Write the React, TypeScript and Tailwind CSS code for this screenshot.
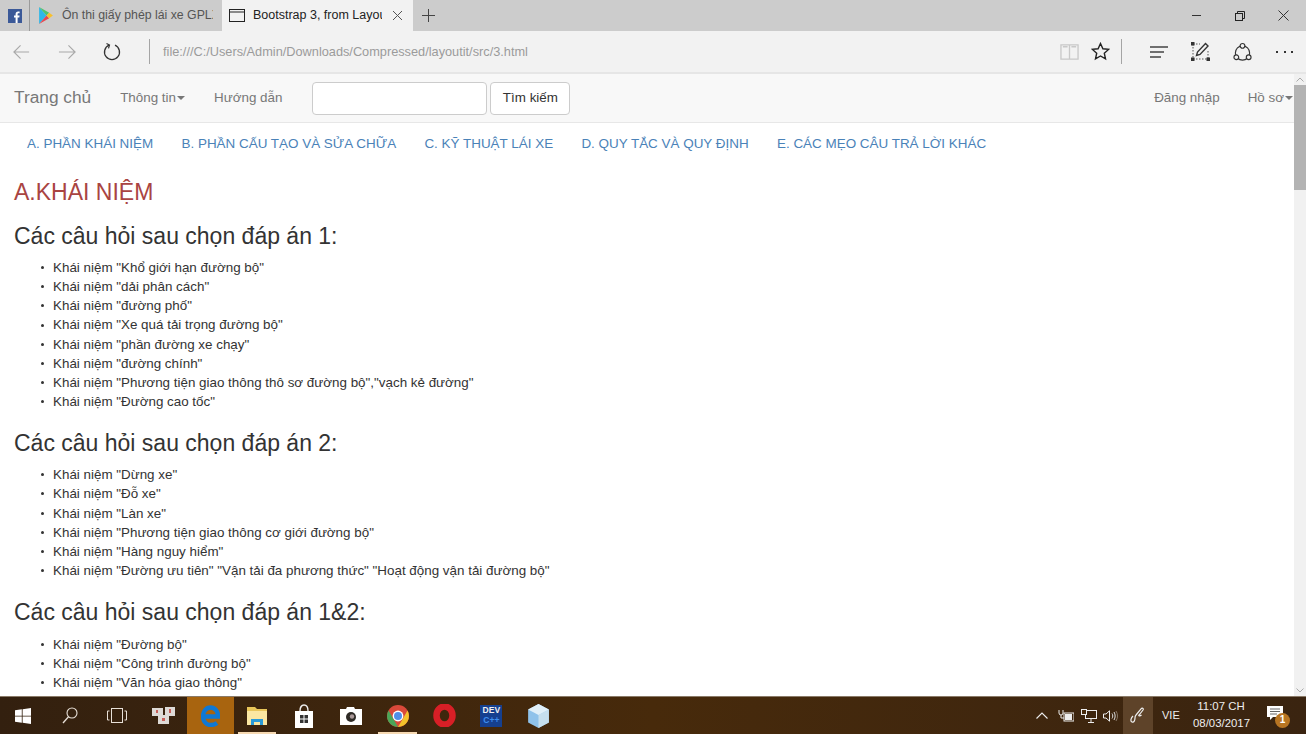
import React from "react";

const Ic = ({ w = 20, h = 20, vb = "0 0 20 20", children, c = "" }: { w?: number; h?: number; vb?: string; children: React.ReactNode; c?: string }) => (
  <svg width={w} height={h} viewBox={vb} fill="none" className={"shrink-0 " + c}>{children}</svg>
);

const Tabs = () => (
  <div className="flex h-[31px] shrink-0 bg-[#cccccc] items-stretch">
    <div className="w-[30px] flex items-center justify-center border-r border-[#9a9a9a]">
      <Ic w={14} h={14} vb="0 0 14 14"><rect width="14" height="14" fill="#3b5998" /><path d="M9.6 14V8.6h1.7l.3-2H9.6V5.300c0-.6.2-1 1-1h1V2.500c-.2 0-.8-.1-1.500-.1-1.500 0-2.500.9-2.500 2.600v1.600H6v2h1.600V14z" fill="#fff" /></Ic>
    </div>
    <div className="w-[192px] flex items-center pl-[9px] overflow-hidden">
      <Ic w={14} h={17} vb="0 0 13 16"><path d="M0 0l7 8-7 8z" fill="#2fb7e8" /><path d="M0 0l9.500 5.500L7 8z" fill="#4fc36b" /><path d="M0 16l9.500-5.500L7 8z" fill="#e8474f" /><path d="M9.500 5.500L13 8l-3.500 2.500L7 8z" fill="#f8c02c" /></Ic>
      <span className="ml-[9px] text-[12.300px] text-[#555] whitespace-nowrap overflow-hidden w-[151px]">Ôn thi giấy phép lái xe GPLX</span>
    </div>
    <div className="w-[191px] bg-[#f2f2f2] flex items-center pl-[7px]">
      <Ic w={16} h={13} vb="0 0 16 13"><rect x=".5" y=".5" width="15" height="12" stroke="#222" /><path d="M1 3h14" stroke="#222" /></Ic>
      <span className="ml-[8px] text-[12.500px] text-[#222] whitespace-nowrap overflow-hidden w-[129px]">Bootstrap 3, from Layout</span>
      <Ic w={11} h={11} vb="0 0 11 11" c="ml-[10px]"><path d="M1 1l9 9M10 1l-9 9" stroke="#555" /></Ic>
    </div>
    <div className="flex items-center pl-[9px]">
      <Ic w={13} h={13} vb="0 0 13 13"><path d="M6.500 0v13M0 6.500h13" stroke="#444" /></Ic>
    </div>
    <div className="ml-auto flex items-center">
      <div className="w-[44px] flex justify-center"><div className="w-[9px] h-px bg-[#333]" /></div>
      <div className="w-[44px] flex justify-center">
        <Ic w={10} h={10} vb="0 0 10 10"><rect x=".5" y="2.500" width="7" height="7" stroke="#222" /><path d="M2.500 2.500v-2h7v7h-2" stroke="#222" /></Ic>
      </div>
      <div className="w-[44px] pr-[1px] flex justify-center">
        <Ic w={11} h={11} vb="0 0 11 11"><path d="M.5.5l10 10M10.500.5l-10 10" stroke="#333" /></Ic>
      </div>
    </div>
  </div>
);

const AddressBar = () => (
  <div className="flex h-[43px] shrink-0 items-center bg-[#f2f2f2] border-b-2 border-[#e6e6e6]">
    <Ic w={19} h={16} vb="0 0 20 16" c="ml-[12px]"><path d="M18 8H2M9 1L2 8l7 7" stroke="#a8a8a8" strokeWidth="1.200" /></Ic>
    <Ic w={19} h={16} vb="0 0 20 16" c="ml-[27px]"><path d="M1 8h16M11 1l7 7-7 7" stroke="#a8a8a8" strokeWidth="1.200" /></Ic>
    <Ic w={19} h={19} vb="0 0 19 19" c="ml-[26px]"><path d="M6 3.200a7.500 7.500 0 1 0 6 0" stroke="#333" strokeWidth="1.300" /><path d="M3.500 1.500L6.500 3l-1 3.300" stroke="#333" strokeWidth="1.200" /></Ic>
    <div className="ml-[27px] w-px h-[25px] bg-[#a5a5a5]" />
    <span className="ml-[13px] text-[12.750px] text-[#9b9b9b]">file:///C:/Users/Admin/Downloads/Compressed/layoutit/src/3.html</span>
    <div className="ml-auto flex items-center">
      <Ic w={19} h={18} vb="0 0 20 18"><path d="M1 1.500h18v15H1zM10 1.500v15M3 3.500h5M12 3.500h5" stroke="#c8c8c8" strokeWidth="1.400" /></Ic>
      <Ic w={19} h={19} vb="0 0 19 19" c="ml-[12px]"><path d="M9.500 1.500l2.400 5.300 5.700.6-4.300 3.800 1.200 5.700-5-2.900-5 2.900 1.200-5.700-4.300-3.800 5.700-.6z" stroke="#222" strokeWidth="1.400" /></Ic>
      <div className="ml-[11px] w-px h-[25px] bg-[#a5a5a5]" />
      <Ic w={20} h={12} vb="0 0 20 12" c="ml-[27px]"><path d="M1 1h18M1 6h14M1 11h11" stroke="#444" strokeWidth="1.300" /></Ic>
      <Ic w={19} h={19} vb="0 0 19 19" c="ml-[22px]"><path d="M2 2h7M2 2v15M2 17h15M17 9v8" stroke="#555" strokeDasharray="1.500 1.500" /><rect x="0" y="0" width="3.500" height="3.500" fill="#333" /><rect x="0" y="15.500" width="3.500" height="3.500" fill="#333" /><rect x="15.500" y="15.500" width="3.500" height="3.500" fill="#333" /><path d="M5.500 13.500l1-3.500 8-8.500 2.500 2.500-8 8.500z" stroke="#333" strokeWidth="1.400" /></Ic>
      <Ic w={19} h={20} vb="0 0 20 20" c="ml-[23px]"><circle cx="10" cy="11" r="7.500" stroke="#333" strokeWidth="1.200" /><circle cx="10" cy="3.500" r="2.500" fill="#f2f2f2" stroke="#333" strokeWidth="1.200" /><circle cx="3.500" cy="15.500" r="2.500" fill="#f2f2f2" stroke="#333" strokeWidth="1.200" /><circle cx="16.500" cy="15.500" r="2.500" fill="#f2f2f2" stroke="#333" strokeWidth="1.200" /></Ic>
      <div className="ml-[24px] mr-[13px] w-[17px] flex justify-between">
        <div className="w-[2px] h-[2px] bg-[#333]" /><div className="w-[2px] h-[2px] bg-[#333]" /><div className="w-[2px] h-[2px] bg-[#333]" />
      </div>
    </div>
  </div>
);

const Caret = () => <span className="inline-block ml-[1px] align-middle border-x-[4px] border-x-transparent border-t-[4px] border-t-[#777]" />;

const Navbar = () => (
  <div className="flex h-[49px] shrink-0 items-center bg-[#f8f8f8] border-b border-[#e7e7e7] text-[#777] text-[13.400px]">
    <span className="ml-[14px] text-[17.300px]">Trang chủ</span>
    <span className="ml-[29px]">Thông tin<Caret /></span>
    <span className="ml-[29px]">Hướng dẫn</span>
    <div className="ml-[30px] w-[175px] h-[33px] bg-white border border-[#ccc] rounded-[4px]" />
    <div className="ml-[3px] w-[80px] h-[33px] bg-white border border-[#ccc] rounded-[4px] flex items-center justify-center text-[#333]">Tìm kiếm</div>
    <span className="ml-auto">Đăng nhập</span>
    <span className="ml-[28px] mr-[1px] whitespace-nowrap">Hồ sơ<Caret /></span>
  </div>
);

const navs = ["A. PHẦN KHÁI NIỆM", "B. PHẦN CẤU TẠO VÀ SỬA CHỮA", "C. KỸ THUẬT LÁI XE", "D. QUY TẮC VÀ QUY ĐỊNH", "E. CÁC MẸO CÂU TRẢ LỜI KHÁC"];

const groups = [
  { t: "Các câu hỏi sau chọn đáp án 1:", items: ['Khái niệm "Khổ giới hạn đường bộ"', 'Khái niệm "dải phân cách"', 'Khái niệm "đường phố"', 'Khái niệm "Xe quá tải trọng đường bộ"', 'Khái niệm "phần đường xe chạy"', 'Khái niệm "đường chính"', 'Khái niệm "Phương tiện giao thông thô sơ đường bộ","vạch kẻ đường"', 'Khái niệm "Đường cao tốc"'] },
  { t: "Các câu hỏi sau chọn đáp án 2:", items: ['Khái niệm "Dừng xe"', 'Khái niệm "Đỗ xe"', 'Khái niệm "Làn xe"', 'Khái niệm "Phương tiện giao thông cơ giới đường bộ"', 'Khái niệm "Hàng nguy hiểm"', 'Khái niệm "Đường ưu tiên" "Vận tải đa phương thức" "Hoạt động vận tải đường bộ"'] },
  { t: "Các câu hỏi sau chọn đáp án 1&2:", items: ['Khái niệm "Đường bộ"', 'Khái niệm "Công trình đường bộ"', 'Khái niệm "Văn hóa giao thông"'] },
];

const Page = () => (
  <div className="flex-1 min-h-0 flex bg-white">
    <div className="flex-1 min-w-0 overflow-hidden">
      <Navbar />
      <div className="flex pl-[27px] gap-[28.300px] pt-[11px] h-[45px] text-[13.450px] text-[#4a82b8] whitespace-nowrap">
        {navs.map((n) => <span key={n}>{n}</span>)}
      </div>
      <h2 className="mt-[12px] ml-[14px] text-[23px] leading-[25px] text-[#a94442]">A.KHÁI NIỆM</h2>
      {groups.map((g, i) => (
        <div key={i} className={i === 0 ? "mt-[19px]" : "mt-[20px]"}>
          <h3 className="ml-[14px] text-[23px] leading-[25px] text-[#333]">{g.t}</h3>
          <ul className={(i === 2 ? "mt-[10px] leading-[19px]" : "mt-[9px] leading-[19.150px]") + " pl-[38px] text-[13.400px] text-[#333]"}>
            {g.items.map((x) => (
              <li key={x} className="flex items-center whitespace-nowrap">
                <span className="w-[3px] h-[3px] rounded-full bg-[#333] mr-[9px] ml-[3px]" />{x}
              </li>
            ))}
          </ul>
        </div>
      ))}
    </div>
    <div className="w-[12px] shrink-0 bg-[#f1f1f1] flex flex-col">
      <div className="h-[11px] flex items-center justify-center">
        <Ic w={8} h={5} vb="0 0 8 5"><path d="M.5 4.500L4 1l3.500 3.500" stroke="#aaa" /></Ic>
      </div>
      <div className="h-[105px] bg-[#b3b3b3]" />
      <div className="mt-auto h-[11px] flex items-center justify-center">
        <Ic w={8} h={5} vb="0 0 8 5"><path d="M.5.500L4 4l3.500-3.500" stroke="#aaa" /></Ic>
      </div>
    </div>
  </div>
);

const TBtn = ({ active = false, under = false, children }: { active?: boolean; under?: boolean; children: React.ReactNode }) => (
  <div className={"w-[46.800px] h-full shrink-0 flex items-center justify-center relative " + (active ? "bg-[#a8640f]" : "")}>
    {children}
    {under && <div className="absolute bottom-0 left-[4px] right-[5px] h-[2px] bg-[#f6d9b2]" />}
  </div>
);

const Taskbar = () => (
  <div className="h-[38px] shrink-0 flex items-center bg-gradient-to-r from-[#33200f] via-[#472a0b] to-[#3a2410] border-t border-[#8a7a68] text-white">
    <TBtn>
      <Ic w={16} h={16} vb="0 0 16 16"><path d="M0 2.300l6.800-1v6.400H0zM7.600 1.200L16 0v7.700H7.600zM0 8.500h6.800v6.300L0 13.800zM7.600 8.500H16V16l-8.400-1.200z" fill="#fff" /></Ic>
    </TBtn>
    <TBtn>
      <Ic w={16} h={17} vb="0 0 16 17"><circle cx="10" cy="6" r="5" stroke="#e8e0d8" strokeWidth="1.100" /><path d="M6.500 9.800L1 16" stroke="#e8e0d8" strokeWidth="1.300" /></Ic>
    </TBtn>
    <TBtn>
      <Ic w={20} h={15} vb="0 0 20 15"><rect x="4.500" y=".5" width="11" height="14" stroke="#e8e0d8" /><path d="M2.500 3H.5v9h2M17.500 3h2v9h-2" stroke="#e8e0d8" /></Ic>
    </TBtn>
    <TBtn>
      <Ic w={23} h={17} vb="0 0 23 17"><path d="M0 1h11v8H0zM13 0h10v9H13zM6 8h11v9H6z" fill="#dedad6" /><rect x="4" y="3" width="2" height="3" fill="#c9605a" /><rect x="17" y="2" width="2" height="4" fill="#c9605a" /><rect x="10" y="11" width="3" height="3" fill="#c9605a" /></Ic>
    </TBtn>
    <TBtn active>
      <Ic w={19} h={22} vb="0 0 19 22"><path d="M3 11.500h14c.3-5-3-9-7.500-9-4.500 0-7.500 4-7.500 9s3.500 8.500 7.500 8.500c2.500 0 4.500-.6 6.500-2" stroke="#0f78d4" strokeWidth="4.400" /></Ic>
    </TBtn>
    <TBtn under>
      <Ic w={20} h={18} vb="0 0 20 18"><path d="M0 0h8l2 2h10v16H0z" fill="#e9c65a" /><path d="M0 4h20v14H0z" fill="#fbe7a2" /><path d="M4 18v-6h12v6h-3v-3H7v3z" fill="#2a9bd8" /></Ic>
    </TBtn>
    <TBtn>
      <Ic w={20} h={24} vb="0 0 20 24"><path d="M1 7h18v17H1z" fill="#fff" /><path d="M6 7c0-8 8-8 8 0" stroke="#eee" strokeWidth="1.400" /><path d="M6 11h3.500v3.500H6zM10.500 11H14v3.500h-3.500zM6 15.500h3.500V19H6zM10.500 15.500H14V19h-3.500z" fill="#333" /></Ic>
    </TBtn>
    <TBtn>
      <Ic w={22} h={18} vb="0 0 22 18"><path d="M0 2h6l1-2h7l1 2h7v16H0z" fill="#fff" /><circle cx="11" cy="10" r="5" fill="#2e2a26" /><circle cx="12" cy="9.500" r="2.200" fill="#a99" /></Ic>
    </TBtn>
    <div className="w-[46.800px] h-full shrink-0 flex items-center justify-center relative">
      <Ic w={22} h={22} vb="0 0 22 22"><circle cx="11" cy="11" r="11" fill="#d9493a" /><path d="M20.500 5.500A11 11 0 0 1 11 22l5-8.500z" fill="#f4c22b" /><path d="M11 22A11 11 0 0 1 1.500 5.500l5 8.500z" fill="#4aa657" /><circle cx="11" cy="11" r="5.400" fill="#fff" /><circle cx="11" cy="11" r="4" fill="#4f8fe8" /></Ic>
      <div className="absolute bottom-0 left-[4px] right-[4px] h-[2px] bg-[#f6d9b2]" />
    </div>
    <TBtn>
      <Ic w={23} h={23} vb="0 0 23 23"><ellipse cx="11.500" cy="11.500" rx="8" ry="9" stroke="#d81f26" strokeWidth="6.500" /></Ic>
    </TBtn>
    <TBtn>
      <div className="w-[22px] h-[22px] bg-[#16408f] flex flex-col items-center">
        <span className="text-[8.500px] leading-[11px] font-bold text-[#eee] [font-family:'Liberation_Sans',sans-serif]">DEV</span>
        <span className="text-[8.500px] leading-[9px] font-bold text-[#3f8ff0] [font-family:'Liberation_Sans',sans-serif]">C++</span>
      </div>
    </TBtn>
    <TBtn>
      <Ic w={21} h={24} vb="0 0 19 22"><path d="M9.500 0L19 5v12l-9.500 5L0 17V5z" fill="#8fc2ea" /><path d="M9.500 10L19 5v12l-9.500 5z" fill="#c6dfee" /><path d="M9.500 0L19 5l-9.500 5L0 5z" fill="#e0eff8" /></Ic>
    </TBtn>
    <div className="ml-auto flex items-center h-full text-[#eee]">
      <Ic w={12} h={7} vb="0 0 12 7"><path d="M.5 6.500L6 1l5.500 5.500" stroke="#eee" strokeWidth="1.100" /></Ic>
      <Ic w={16} h={12} vb="0 0 16 12" c="ml-[10px]"><path d="M1 0v3a2 2 0 0 0 4 0V0M3 5v3h3" stroke="#eee" /><rect x="6" y="3" width="10" height="8" stroke="#eee" /><rect x="7" y="4" width="7" height="6" fill="#eee" /></Ic>
      <Ic w={16} h={14} vb="0 0 16 14" c="ml-[7px]"><rect x="4.500" y="1.500" width="11" height="8" stroke="#eee" /><rect x=".5" y=".5" width="5" height="5" fill="#472a0b" stroke="#eee" /><path d="M10 10v3M7 13.500h6" stroke="#eee" /></Ic>
      <Ic w={15} h={12} vb="0 0 15 12" c="ml-[6px]"><path d="M.5 4h2.500L6.500.8v10.400L3 8H.5z" stroke="#eee" /><path d="M9 3.500c1 1.500 1 3.500 0 5M11 2c1.500 2.500 1.500 5.500 0 8" stroke="#ddd" /><path d="M13 1c2 3 2 7 0 10" stroke="#8a7a68" /></Ic>
      <div className="ml-[5px] w-[30px] h-full bg-[#5e4329] flex items-center justify-center">
        <Ic w={16} h={17} vb="0 0 16 17"><path d="M3 9c-2 2-3 5-1 6s3-2 3-4 1-3 1-3l5-6c1-1.500 3-.5 2 1l-4 5c-1 1 1 1.500 2.500 0" stroke="#eee" strokeWidth="1.200" /></Ic>
      </div>
      <span className="ml-[9px] w-[18px] text-[11px] [font-family:'Liberation_Sans',sans-serif]">VIE</span>
      <div className="ml-[13px] w-[56px] text-center text-[11.400px] leading-[17px] whitespace-nowrap pb-[1px]">
        <div>11:07 CH</div>
        <div>08/03/2017</div>
      </div>
      <div className="ml-[18px] mr-[23px] relative w-[16px] h-[22px] pt-[1px]">
        <Ic w={16} h={15} vb="0 0 16 15"><path d="M0 0h16v11H6l-3 3v-3H0z" fill="#fff" /><path d="M3 3h10M3 5.500h10M3 8h7" stroke="#666" /></Ic>
        <div className="absolute right-[-7px] bottom-[-1px] w-[15px] h-[15px] rounded-full bg-[#b87522] flex items-center justify-center text-[10px] font-bold leading-none text-white">1</div>
      </div>
    </div>
  </div>
);

export default function App() {
  return (
    <div className="h-screen w-full overflow-hidden flex flex-col [font-family:'Liberation_Sans',Arial,sans-serif]">
      <Tabs />
      <AddressBar />
      <Page />
      <Taskbar />
    </div>
  );
}
